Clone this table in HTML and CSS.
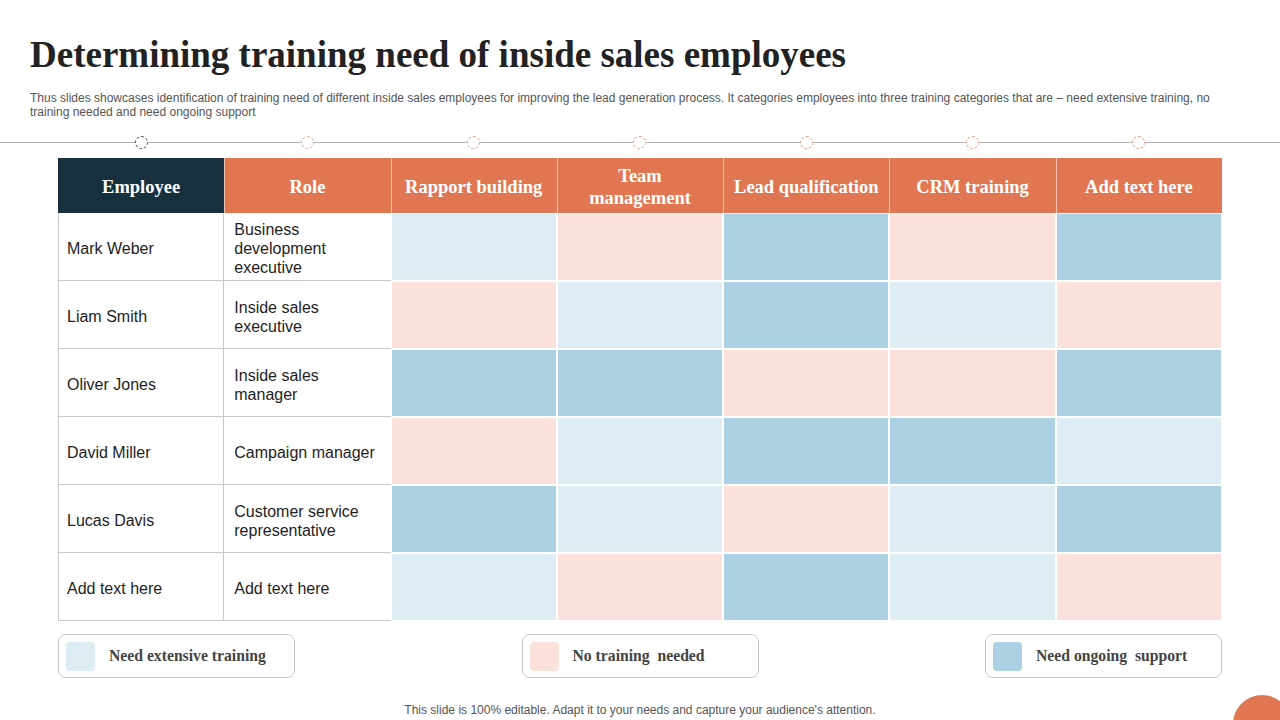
FILE: index.html
```html
<!DOCTYPE html>
<html lang="en">
<head>
<meta charset="utf-8">
<title>Determining training need of inside sales employees</title>
<link rel="stylesheet" href="styles.css">
</head>
<body>
<div class="slide">
  <header class="head">
    <h1 class="title">Determining training need of inside sales employees</h1>
    <p class="subtitle">Thus slides showcases identification of training need of different inside sales employees for improving the lead generation process. It categories employees into three training categories that are – need extensive training, no<br>training needed and need ongoing support</p>
  </header>

  <div class="timeline">
    <div class="dots">
      <span class="dot dark"></span>
      <span class="dot"></span>
      <span class="dot"></span>
      <span class="dot"></span>
      <span class="dot"></span>
      <span class="dot"></span>
      <span class="dot"></span>
    </div>
  </div>

  <div class="table">
    <div class="th th-dark">Employee</div>
    <div class="th">Role</div>
    <div class="th">Rapport building</div>
    <div class="th">Team<br>management</div>
    <div class="th">Lead qualification</div>
    <div class="th">CRM training</div>
    <div class="th">Add text here</div>

    <div class="td name">Mark Weber</div>
    <div class="td role">Business development executive</div>
    <div class="c light"></div><div class="c pink"></div><div class="c blue"></div><div class="c pink"></div><div class="c blue"></div>

    <div class="td name">Liam Smith</div>
    <div class="td role">Inside sales executive</div>
    <div class="c pink"></div><div class="c light"></div><div class="c blue"></div><div class="c light"></div><div class="c pink"></div>

    <div class="td name">Oliver Jones</div>
    <div class="td role">Inside sales manager</div>
    <div class="c blue"></div><div class="c blue"></div><div class="c pink"></div><div class="c pink"></div><div class="c blue"></div>

    <div class="td name">David Miller</div>
    <div class="td role">Campaign manager</div>
    <div class="c pink"></div><div class="c light"></div><div class="c blue"></div><div class="c blue"></div><div class="c light"></div>

    <div class="td name">Lucas Davis</div>
    <div class="td role">Customer service representative</div>
    <div class="c blue"></div><div class="c light"></div><div class="c pink"></div><div class="c light"></div><div class="c blue"></div>

    <div class="td name last">Add text here</div>
    <div class="td role last">Add text here</div>
    <div class="c light"></div><div class="c pink"></div><div class="c blue"></div><div class="c light"></div><div class="c pink"></div>
  </div>

  <div class="legend">
    <div class="key"><span class="sw light"></span><span class="key-text">Need extensive training</span></div>
    <div class="key"><span class="sw pink"></span><span class="key-text">No training&nbsp; needed</span></div>
    <div class="key"><span class="sw blue"></span><span class="key-text">Need ongoing&nbsp; support</span></div>
  </div>

  <p class="footer">This slide is 100% editable. Adapt it to your needs and capture your audience's attention.</p>

  <span class="corner"></span>
</div>
</body>
</html>
```

FILE: styles.css
```css
html, body {
  margin: 0;
  padding: 0;
  background: #ffffff;
}

.slide {
  position: relative;
  width: 1280px;
  height: 720px;
  overflow: hidden;
  background: #ffffff;
}

.head {
  padding: 34px 20px 0 30px;
}

.title {
  margin: 0;
  font-family: "Liberation Serif", "Times New Roman", serif;
  font-weight: bold;
  font-size: 37px;
  line-height: 42px;
  color: #222222;
}

.subtitle {
  margin: 15px 0 0 0;
  font-family: "Liberation Sans", Arial, sans-serif;
  font-size: 12px;
  line-height: 14px;
  color: #555555;
  letter-spacing: 0;
  white-space: nowrap;
}

.timeline {
  margin-top: 16px;
  height: 14px;
  background: linear-gradient(#b5b5b5, #b5b5b5) center / 100% 1px no-repeat;
}

.dots {
  margin: 0 58px;
  display: grid;
  grid-template-columns: repeat(7, 1fr);
  height: 14px;
  align-items: center;
  justify-items: center;
}

.dot {
  width: 13px;
  height: 13px;
  box-sizing: border-box;
  border-radius: 50%;
  border: 1px dashed #e6a08a;
  background: #ffffff;
}

.dot.dark {
  border-color: #4a4a4a;
}

.table {
  margin: 9px 58px 0 58px;
  display: grid;
  grid-template-columns: repeat(7, 1fr);
  grid-template-rows: 55px repeat(6, 68px);
}

.th {
  display: flex;
  align-items: center;
  justify-content: center;
  text-align: center;
  padding-top: 2px;
  background: #e07752;
  color: #ffffff;
  font-family: "Liberation Serif", "Times New Roman", serif;
  font-weight: bold;
  font-size: 18.5px;
  line-height: 22px;
  box-shadow: inset 1px 0 0 #f2c3b2;
}

.th-dark {
  background: #17303e;
  box-shadow: none;
}

.td {
  display: flex;
  align-items: center;
  padding: 4px 10px 0 8px;
  font-family: "Liberation Sans", Arial, sans-serif;
  font-size: 16px;
  line-height: 19px;
  color: #1e1e1e;
  border-bottom: 1px solid #c9c9c9;
  background: #ffffff;
}

.td.name {
  border-left: 1px solid #c9c9c9;
  border-right: 1px solid #c9c9c9;
}

.td.role {
  padding-left: 10px;
}

.c {
  box-shadow: inset 1px 1px 0 #ffffff, inset -1px -1px 0 #ffffff;
}

.light { background: #deedf4; }
.pink { background: #fbe1dc; }
.blue { background: #acd1e3; }

.legend {
  margin: 13px 58px 0 58px;
  display: flex;
  justify-content: space-between;
}

.key {
  width: 237px;
  height: 44px;
  box-sizing: border-box;
  border: 1px solid #c6c6c6;
  border-radius: 8px;
  display: flex;
  align-items: center;
  padding-left: 7px;
  gap: 14px;
  background: #ffffff;
}

.sw {
  width: 29px;
  height: 29px;
  border-radius: 4px;
  flex: none;
}

.key-text {
  font-family: "Liberation Serif", "Times New Roman", serif;
  font-weight: bold;
  font-size: 15.7px;
  color: #444444;
}

.footer {
  margin: 25px 0 0 0;
  text-align: center;
  font-family: "Liberation Sans", Arial, sans-serif;
  font-size: 12px;
  line-height: 14px;
  color: #555555;
}

.corner {
  position: absolute;
  left: 1233px;
  top: 695px;
  width: 58px;
  height: 58px;
  border-radius: 50%;
  background: #e07752;
}
```
